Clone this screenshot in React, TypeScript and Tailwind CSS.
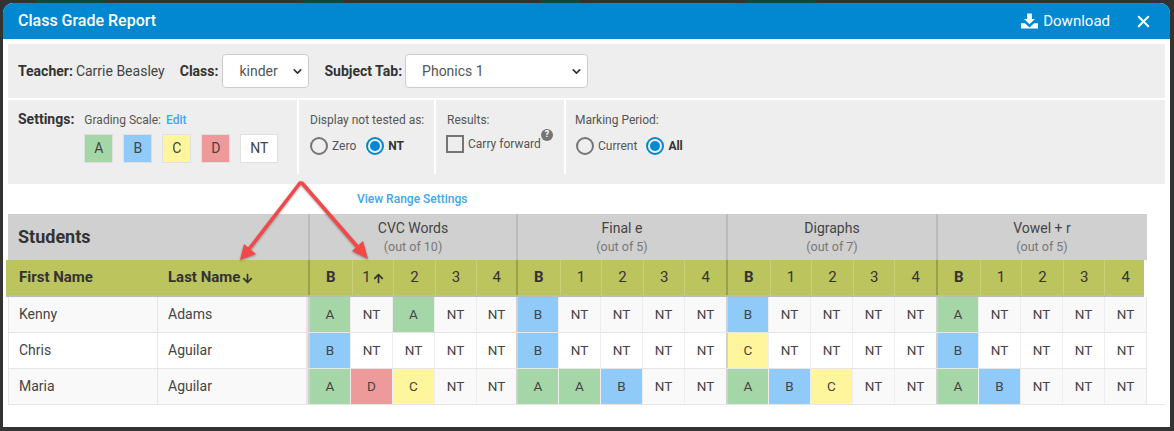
import { ChevronDown, X } from 'lucide-react';
import { FaArrowDown, FaArrowUp } from 'react-icons/fa';

const cellColors: Record<string, string> = {
  A: 'bg-[#a5d6a7]',
  B: 'bg-[#90caf9]',
  C: 'bg-[#fff59d]',
  D: 'bg-[#ef9a9a]',
  NT: '',
};

const groups = [
  { name: 'CVC Words', out: '(out of 10)', width: 'w-[208px]' },
  { name: 'Final e', out: '(out of 5)', width: 'w-[210px]' },
  { name: 'Digraphs', out: '(out of 7)', width: 'w-[210px]' },
  { name: 'Vowel + r', out: '(out of 5)', width: 'w-[210px]' },
];

const students = [
  {
    first: 'Kenny',
    last: 'Adams',
    striped: true,
    grades: ['A', 'NT', 'A', 'NT', 'NT', 'B', 'NT', 'NT', 'NT', 'NT', 'B', 'NT', 'NT', 'NT', 'NT', 'A', 'NT', 'NT', 'NT', 'NT'],
  },
  {
    first: 'Chris',
    last: 'Aguilar',
    striped: false,
    grades: ['B', 'NT', 'NT', 'NT', 'NT', 'B', 'NT', 'NT', 'NT', 'NT', 'C', 'NT', 'NT', 'NT', 'NT', 'B', 'NT', 'NT', 'NT', 'NT'],
  },
  {
    first: 'Maria',
    last: 'Aguilar',
    striped: true,
    grades: ['A', 'D', 'C', 'NT', 'NT', 'A', 'A', 'B', 'NT', 'NT', 'A', 'B', 'C', 'NT', 'NT', 'A', 'B', 'NT', 'NT', 'NT'],
  },
];

function Radio({ label, checked }: { label: string; checked?: boolean }) {
  return (
    <span className="flex items-center gap-[4px]">
      <span
        className={`flex h-[18px] w-[18px] items-center justify-center rounded-full border-2 ${
          checked ? 'border-[#0288d1]' : 'border-[#757575]'
        }`}
      >
        {checked && <span className="h-[10px] w-[10px] rounded-full bg-[#0288d1]" />}
      </span>
      <span className={`text-[12px] ${checked ? 'font-bold text-[#333]' : 'text-[#555]'}`}>{label}</span>
    </span>
  );
}

function Swatch({ label, color }: { label: string; color: string }) {
  return (
    <span
      className={`flex h-[29px] items-center justify-center border border-[#e0e0e0] text-[14px] text-[#444] ${color} ${
        label === 'NT' ? 'w-[38px]' : 'w-[29px]'
      }`}
    >
      {label}
    </span>
  );
}

function FakeSelect({ label, width }: { label: string; width: string }) {
  return (
    <span
      className={`flex h-[34px] items-center justify-between rounded-[4px] border border-[#ccc] bg-white pl-[16px] pr-[4px] text-[14px] text-[#555] ${width}`}
    >
      {label}
      <ChevronDown size={13} strokeWidth={3} className="text-[#333]" />
    </span>
  );
}

export default function App() {
  return (
    <div className="relative flex h-[431px] w-[1174px] flex-col overflow-hidden bg-[#333333] pb-[4px] pl-[3px] pr-[4px] font-['Roboto',sans-serif]">
      {/* Page behind the dialog, barely visible at the top */}
      <div className="flex h-[3px] shrink-0">
        <span className="ml-[33px] w-[69px] bg-[#0a4a40]" />
        <span className="ml-[198px] w-[41px] bg-[#0a4a40]" />
        <span className="ml-[197px] w-[39px] bg-[#0a4a40]" />
        <span className="ml-[166px] w-[70px] bg-[#0a4a40]" />
      </div>

      <div className="flex flex-1 flex-col overflow-hidden rounded-t-[10px] bg-white">
        {/* Header */}
        <div className="flex h-[36px] shrink-0 items-center justify-between bg-[#0288d1] pl-[15px] pr-[17px] text-white">
          <span className="text-[16px] font-medium">Class Grade Report</span>
          <div className="flex items-center">
            <svg viewBox="0 0 18 16" className="mr-[5px] h-[16px] w-[17px]" fill="currentColor">
              <path d="M6.5 0h5v6h3.2L9 11.5 3.3 6h3.2z" />
              <path d="M0 10.5h4.2L9 15l4.8-4.5H18V16H0z" />
            </svg>
            <span className="text-[15px]">Download</span>
            <X size={19} strokeWidth={2.5} className="ml-[24px]" />
          </div>
        </div>

        {/* Report filters */}
        <div className="mx-[5px] mt-[5px] flex h-[54px] shrink-0 items-center bg-[#eeeeee] pl-[10px] text-[14px] text-[#444]">
          <b className="font-bold text-[#333]">Teacher:</b>
          <span className="ml-[3px]">Carrie Beasley</span>
          <b className="ml-[15px] mr-[4px] font-bold text-[#333]">Class:</b>
          <FakeSelect label="kinder" width="w-[87px]" />
          <b className="ml-[15px] mr-[3px] font-bold text-[#333]">Subject Tab:</b>
          <FakeSelect label="Phonics 1" width="w-[183px]" />
        </div>

        {/* Settings */}
        <div className="mx-[5px] mt-[2px] flex h-[84px] shrink-0 bg-[#eeeeee] text-[12px] text-[#555]">
          <div className="flex h-[74px] w-[291px] shrink-0 border-r-2 border-white pl-[10px] pt-[9px]">
            <b className="text-[14px] font-bold text-[#333]">Settings:</b>
            <div className="ml-[10px] mt-[2px]">
              <div>
                Grading Scale: <span className="ml-[2px] font-medium text-[#42a5f5]">Edit</span>
              </div>
              <div className="mt-[5px] flex gap-[10px]">
                <Swatch label="A" color="bg-[#a5d6a7]" />
                <Swatch label="B" color="bg-[#90caf9]" />
                <Swatch label="C" color="bg-[#fff59d]" />
                <Swatch label="D" color="bg-[#ef9a9a]" />
                <Swatch label="NT" color="bg-white" />
              </div>
            </div>
          </div>
          <div className="h-[74px] w-[137px] shrink-0 border-r-2 border-white pl-[11px] pt-[11px]">
            <div>Display not tested as:</div>
            <div className="mt-[8px] flex gap-[10px]">
              <Radio label="Zero" />
              <Radio label="NT" checked />
            </div>
          </div>
          <div className="h-[74px] w-[130px] shrink-0 border-r-2 border-white pl-[11px] pt-[11px]">
            <div>Results:</div>
            <div className="relative -ml-[1px] mt-[6px] flex items-center gap-[4px]">
              <span className="h-[18px] w-[18px] border-2 border-[#757575]" />
              <span>Carry forward</span>
              <span className="absolute left-[95px] top-[-6px] flex h-[12px] w-[12px] items-center justify-center rounded-full bg-[#757575] text-[9px] font-bold text-white">
                ?
              </span>
            </div>
          </div>
          <div className="pl-[10px] pt-[11px]">
            <div className="-ml-[1px]">Marking Period:</div>
            <div className="mt-[8px] flex gap-[9px]">
              <Radio label="Current" />
              <Radio label="All" checked />
            </div>
          </div>
        </div>

        <div className="ml-[354px] mt-[6px] h-[16px] shrink-0 text-[12px] font-medium text-[#42a5f5]">View Range Settings</div>

        {/* Grade table */}
        <div className="ml-[5px] mt-[8px] w-[1139px] shrink-0">
          <div className="flex h-[46px] bg-[#d0d0d0]">
            <div className="flex w-[300px] shrink-0 items-center pb-[2px] pl-[10px] text-[18px] font-bold text-[#333]">Students</div>
            {groups.map((group) => (
              <div key={group.name} className={`flex flex-col items-center border-l-2 border-[#bbbbbb] pt-[5px] text-center ${group.width}`}>
                <span className="text-[14px] leading-[18px] text-[#444]">{group.name}</span>
                <span className="text-[12.5px] leading-[20px] text-[#777]">{group.out}</span>
              </div>
            ))}
          </div>

          <div className="relative -ml-[2px] flex h-[37px] w-[1138px] border-b-2 border-[#bbbbbb] bg-[#bcc45e] text-[15px] text-[#333]">
            <div className="flex w-[152px] shrink-0 items-center pl-[13px] font-bold">First Name</div>
            <div className="flex w-[150px] shrink-0 items-center pl-[10px] font-bold">
              Last Name
              <FaArrowDown size={11} className="ml-[2px] mt-[1px]" />
            </div>
            {groups.map((group, g) => (
              <div key={group.name} className={`flex border-l-2 border-[#9aa04c] ${group.width}`}>
                {['B', '1', '2', '3', '4'].map((col, i) => (
                  <div
                    key={col}
                    className={`flex items-center justify-center ${g === 0 && i === 4 ? 'w-[40px]' : 'w-[42px]'} ${
                      i > 0 ? 'border-l border-[#c9d077]' : 'font-bold'
                    }`}
                  >
                    {col}
                    {g === 0 && col === '1' && <FaArrowUp size={11} className="ml-[2px] mt-[1px]" />}
                  </div>
                ))}
              </div>
            ))}
          </div>

          {students.map((s) => (
            <div key={s.first} className={`flex h-[36px] border-b border-[#e6e6e6] text-[14px] text-[#444] ${s.striped ? 'bg-[#f9f9f9]' : 'bg-white'}`}>
              <div className="flex w-[150px] shrink-0 items-center border-x border-[#e6e6e6] pl-[10px]">{s.first}</div>
              <div className="flex w-[150px] shrink-0 items-center border-r-2 border-[#e6e6e6] pl-[10px]">{s.last}</div>
              <div className="flex border-r border-[#e6e6e6]">
                {s.grades.map((g, i) => (
                  <div
                    key={i}
                    className={`flex items-center justify-center text-[13.5px] ${i === 4 ? 'w-[40px]' : 'w-[42px]'} ${cellColors[g]} ${
                      i % 5 === 0 ? 'border-l-2 border-[#d0d0d0]' : 'border-l border-[#eeeeee]'
                    }`}
                  >
                    {g}
                  </div>
                ))}
              </div>
            </div>
          ))}
        </div>

        {/* Rule under the table, runs on past the last column */}
        <div className="-mt-px ml-[5px] mr-[5px] h-px shrink-0 bg-[#e6e6e6]" />
      </div>

      {/* Annotation arrows over the screenshot */}
      <svg className="pointer-events-none absolute left-0 top-0 h-[431px] w-[1174px] drop-shadow-[0_1px_1px_rgba(0,0,0,0.35)]" viewBox="0 0 1174 431" fill="none">
        <g stroke="#f44848" strokeWidth="3.5" strokeLinecap="round">
          <path d="M300 183 L246 253" />
          <path d="M302 183 L362 252" />
        </g>
        <path d="M240 260 L244 244 L256 254 Z" fill="#f44848" />
        <path d="M368 259 L352 251 L363 241 Z" fill="#f44848" />
      </svg>
    </div>
  );
}
